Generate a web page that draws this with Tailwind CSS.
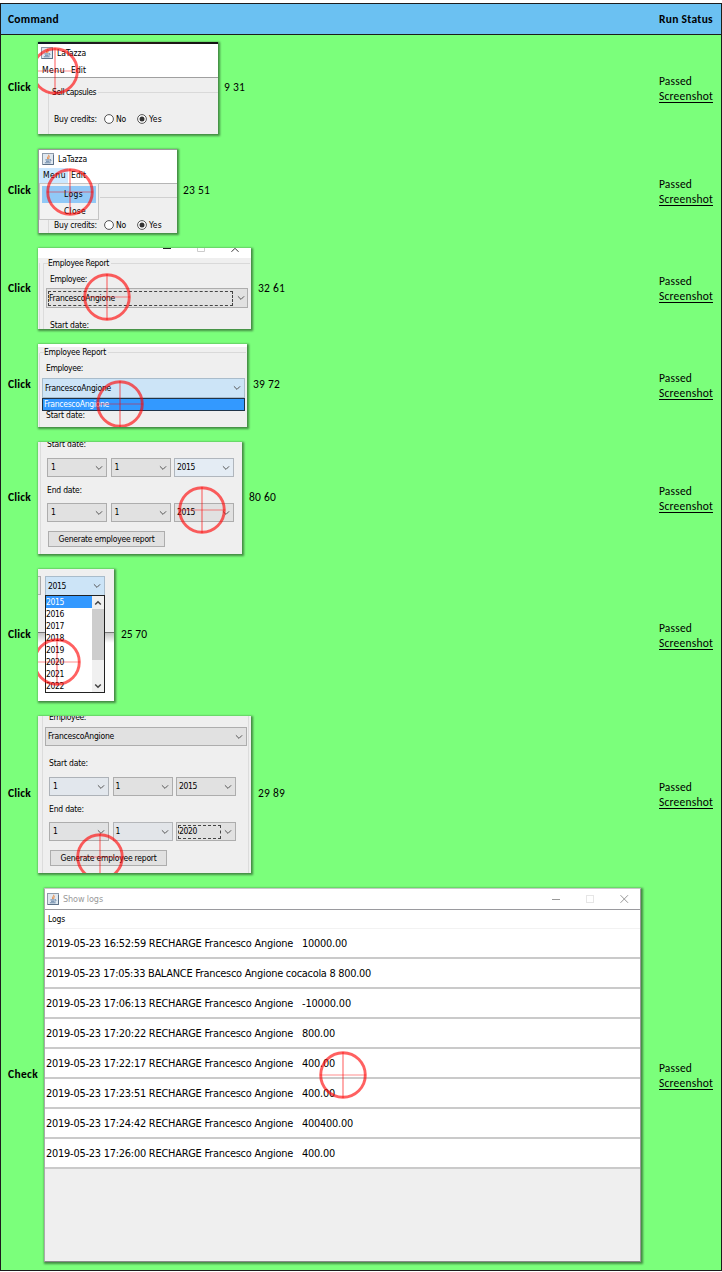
<!DOCTYPE html>
<html lang="en">
<head>
<meta charset="utf-8">
<title>Test run report</title>
<script src="https://cdn.jsdelivr.net/npm/@tailwindcss/browser@4"></script>
</head>
<body class="bg-white">
<svg width="0" height="0" class="absolute">
  <symbol id="cross" viewBox="0 0 48 48"><circle cx="24" cy="24" r="22.3" fill="none" stroke="#ff0000" stroke-opacity=".62" stroke-width="2.9"/><path d="M24 1V47" stroke="#ff0000" stroke-opacity=".6" stroke-width="1.1"/><path d="M1 24H47" stroke="#ff0000" stroke-opacity=".45" stroke-width="1.1"/></symbol>
  <symbol id="java" viewBox="0 0 12 12"><rect x=".5" y=".5" width="11" height="11" fill="#dfe8f0" stroke="#8e9baa"/><path d="M1 11.5H11.5V2" fill="none" stroke="#5d7188"/><path d="M6.6 1.8C7.6 3.2 4.6 3.8 5.8 6M7.8 3.6C6.4 4.4 6.4 5 7 6" fill="none" stroke="#e8843a" stroke-width="1"/><path d="M3.4 6.9H7.8M4 8.3H7.4M2.8 9.8H8.6M8 6.6C9.6 6.4 9.4 8 7.8 8.2" fill="none" stroke="#4c6f96" stroke-width=".8"/></symbol>
  <symbol id="chev" viewBox="0 0 8 6"><path d="M.9 1.3L4 4.4L7.1 1.3" fill="none" stroke="#555" stroke-width="1"/></symbol>
  <symbol id="off" viewBox="0 0 10 10"><circle cx="5" cy="5" r="4.4" fill="#fff" stroke="#444" stroke-width=".9"/></symbol>
  <symbol id="on" viewBox="0 0 10 10"><circle cx="5" cy="5" r="4.4" fill="#fff" stroke="#444" stroke-width=".9"/><circle cx="5" cy="5" r="2.5" fill="#333"/></symbol>
</svg>

<div class="mt-[3px] h-[1268px] w-[722px] border border-[#1c1c1c] bg-[#7bff7b] font-['Carlito','Lato',sans-serif] text-[11.5px] leading-[15px] text-black">
  <div class="flex h-[31px] items-center border-b border-[#1c1c1c] bg-[#6bc1f2] pl-[7px] font-bold">
    <div class="w-[651px]"><span data-w="51">Command</span></div><div><span data-w="54">Run Status</span></div>
  </div>

  <!-- 1 -->
  <div class="flex h-[106px] items-center pl-[7px]">
    <div class="w-[30px] pb-[2px] font-bold"><span data-w="23">Click</span></div>
    <div class="relative flex h-[92px] w-[180px] flex-col overflow-hidden bg-[#efefef] font-['DejaVu_Sans_Condensed','DejaVu_Sans',sans-serif] text-[8.5px] shadow-[1px_1px_2px_1px_rgba(0,0,0,0.45)]">
      <div class="h-[2px] shrink-0 bg-linear-to-r from-[#0c1a26] via-[#2a1a18] to-[#111]"></div>
      <div class="flex h-[18px] shrink-0 items-center gap-[4px] bg-white pl-[3px]"><svg class="size-[12px]"><use href="#java"/></svg><span data-w="29">LaTazza</span></div>
      <div class="flex h-[16px] shrink-0 items-center gap-[6px] border-b border-[#a0a0a0] bg-white pl-[4px] pt-[2px]"><span data-w="23">Menu</span><span data-w="15">Edit</span></div>
      <div class="ml-[10px] mt-[6px] flex h-[16px] shrink-0 items-center"><span class="-mr-px h-px w-[5px] bg-[#d9d9d9]"></span><span data-w="44">Sell capsules</span><span class="ml-[2px] h-px grow bg-[#d9d9d9]"></span></div>
      <div class="-mt-[8px] ml-[10px] flex h-[60px] shrink-0 border-l border-[#d9d9d9] pl-[5px] pt-[18px]">
        <div class="flex h-[18px] items-center"><span class="w-[50px]"><span data-w="43">Buy credits:</span></span><svg class="size-[10px]"><use href="#off"/></svg><span class="ml-[2px] w-[21px]"><span data-w="10">No</span></span><svg class="size-[10px]"><use href="#on"/></svg><span class="ml-[2px]" data-w="13">Yes</span></div>
      </div>
      <svg class="absolute -left-[7.5px] top-[4.5px] size-[48px]"><use href="#cross"/></svg>
    </div>
    <div class="ml-[6px] grow pb-[2px]"><span data-w="21">9 31</span></div>
    <div class="w-[62px] pt-[2px]"><div><span data-w="33">Passed</span></div><div><span class="inline-block h-[14px] border-b border-black" data-w="54">Screenshot</span></div></div>
  </div>

  <!-- 2 -->
  <div class="flex h-[100px] items-center pl-[7px]">
    <div class="w-[30px] pb-[2px] font-bold"><span data-w="23">Click</span></div>
    <div class="relative flex h-[84px] w-[139px] flex-col overflow-hidden border-l border-t border-[#999] bg-[#efefef] font-['DejaVu_Sans_Condensed','DejaVu_Sans',sans-serif] text-[8.5px] shadow-[1px_1px_2px_1px_rgba(0,0,0,0.45)]">
      <div class="flex h-[18px] shrink-0 items-center gap-[4px] bg-white pl-[3px]"><svg class="size-[12px]"><use href="#java"/></svg><span data-w="29">LaTazza</span></div>
      <div class="flex h-[16px] shrink-0 items-center gap-[3px] border-b border-[#b5b5b5] bg-white"><span class="flex h-[15px] w-[29px] items-center bg-[#cce8ff] pl-[4px]"><span data-w="23">Menu</span></span><span data-w="15">Edit</span></div>
      <div class="ml-[61px] mt-[13px] h-px shrink-0 bg-[#d0d0d0]"></div>
      <div class="ml-[9px] flex h-[60px] shrink-0 border-l border-[#d9d9d9] pl-[5px] pt-[18px]">
        <div class="flex h-[18px] items-center"><span class="w-[50px]"><span data-w="43">Buy credits:</span></span><svg class="size-[10px]"><use href="#off"/></svg><span class="ml-[2px] w-[21px]"><span data-w="10">No</span></span><svg class="size-[10px]"><use href="#on"/></svg><span class="ml-[2px]" data-w="13">Yes</span></div>
      </div>
      <div class="absolute left-0 top-[33px] h-[37px] w-[60px] border border-[#c4c4c4] bg-[#f2f2f2] p-[2px]">
        <div class="flex h-[17px] w-[54px] items-center bg-[#91c9f7] pl-[22px]"><span data-w="19">Logs</span></div>
        <div class="flex h-[16px] items-center pl-[22px]"><span data-w="22">Close</span></div>
      </div>
      <svg class="absolute left-[6.5px] top-[18px] size-[48px]"><use href="#cross"/></svg>
    </div>
    <div class="ml-[6px] grow pb-[2px]"><span data-w="27">23 51</span></div>
    <div class="w-[62px] pt-[2px]"><div><span data-w="33">Passed</span></div><div><span class="inline-block h-[14px] border-b border-black" data-w="54">Screenshot</span></div></div>
  </div>

  <!-- 3 -->
  <div class="flex h-[95px] items-center pl-[7px]">
    <div class="w-[30px] font-bold"><span data-w="23">Click</span></div>
    <div class="relative flex h-[81px] w-[213px] flex-col overflow-hidden bg-[#efefef] font-['DejaVu_Sans_Condensed','DejaVu_Sans',sans-serif] text-[8.5px] shadow-[1px_1px_2px_1px_rgba(0,0,0,0.45)]">
      <div class="flex h-[10px] shrink-0 bg-white pl-[125px]">
        <svg width="80" height="6" viewBox="0 0 80 6"><path d="M0 .5H8" stroke="#222"/><path d="M34.500 0V3.500H41.500V0" fill="none" stroke="#ccc"/><path d="M68.500 3.800L72 .3L75.500 3.800" fill="none" stroke="#333"/></svg>
      </div>
      <div class="flex h-[11px] shrink-0 items-center"><span class="ml-[5px] h-px w-[5px] bg-[#d9d9d9]"></span><span data-w="61">Employee Report</span><span class="ml-[2px] mr-px h-px grow bg-[#d9d9d9]"></span></div>
      <div class="-mt-[6px] ml-[1px] flex h-[70px] shrink-0 border-l border-[#dcdcdc] pl-[3px]">
        <div class="flex w-[206px] flex-col border-l border-[#dcdcdc] pt-[9px]">
          <div class="ml-[6px] flex h-[14px] items-center"><span data-w="37">Employee:</span></div>
          <div class="ml-[2px] mt-[2px] flex h-[20px] w-[202px] shrink-0 items-center border border-[#adadad] bg-[#e1e1e1] pl-[1px]"><div class="flex h-[15px] w-[185px] items-center border border-dashed border-[#444]"><span data-w="66">FrancescoAngione</span></div><svg class="ml-[4px] h-[6px] w-[8px]"><use href="#chev"/></svg></div>
          <div class="ml-[6px] mt-[10px] flex h-[14px] items-center"><span data-w="39">Start date:</span></div>
        </div>
      </div>
      <svg class="absolute left-[44.5px] top-[25px] size-[48px]"><use href="#cross"/></svg>
    </div>
    <div class="ml-[7px] grow"><span data-w="27">32 61</span></div>
    <div class="w-[62px] pt-[1px]"><div><span data-w="33">Passed</span></div><div><span class="inline-block h-[14px] border-b border-black" data-w="54">Screenshot</span></div></div>
  </div>

  <!-- 4 -->
  <div class="flex h-[99px] items-center pl-[7px]">
    <div class="w-[30px] pb-[2px] font-bold"><span data-w="23">Click</span></div>
    <div class="relative flex h-[83px] w-[209px] flex-col overflow-hidden bg-[#efefef] font-['DejaVu_Sans_Condensed','DejaVu_Sans',sans-serif] text-[8.5px] shadow-[1px_1px_2px_1px_rgba(0,0,0,0.45)]">
      <div class="h-[3px] shrink-0 bg-white"></div>
      <div class="flex h-[11px] shrink-0 items-center"><span class="ml-[2px] h-px w-[4px] bg-[#d9d9d9]"></span><span data-w="62">Employee Report</span><span class="ml-[2px] mr-px h-px grow bg-[#d9d9d9]"></span></div>
      <div class="-mt-[5px] ml-[1px] flex h-[80px] w-[207px] shrink-0 flex-col border-l border-[#dcdcdc] pt-[8px]">
        <div class="ml-[6px] flex h-[14px] items-center"><span data-w="37">Employee:</span></div>
        <div class="ml-[2px] mt-[3px] flex h-[20px] w-[203px] shrink-0 items-center justify-between border border-[#a9bccb] bg-[#cce4f7] pl-[2px] pr-[3px]"><span data-w="66">FrancescoAngione</span><svg class="h-[6px] w-[8px]"><use href="#chev"/></svg></div>
        <div class="ml-[2px] flex h-[13px] w-[203px] shrink-0 items-center border border-[#1f3348] bg-[#3399ff] pl-px text-white"><span data-w="65">FrancescoAngione</span></div>
        <div class="-mt-[1px] ml-[6px] flex h-[10px] items-center"><span data-w="39">Start date:</span></div>
      </div>
      <svg class="absolute left-[57.5px] top-[36px] size-[48px]"><use href="#cross"/></svg>
    </div>
    <div class="ml-[6px] grow pb-[2px]"><span data-w="27">39 72</span></div>
    <div class="w-[62px] pt-[1px]"><div><span data-w="33">Passed</span></div><div><span class="inline-block h-[14px] border-b border-black" data-w="54">Screenshot</span></div></div>
  </div>

  <!-- 5 -->
  <div class="flex h-[126px] items-center pl-[7px]">
    <div class="w-[30px] pb-[2px] font-bold"><span data-w="23">Click</span></div>
    <div class="relative h-[112px] w-[204px] overflow-hidden bg-[#efefef] font-['DejaVu_Sans_Condensed','DejaVu_Sans',sans-serif] text-[8.5px] shadow-[1px_1px_2px_1px_rgba(0,0,0,0.45)]">
      <div class="ml-[2px] flex h-[112px] flex-col border-l border-[#dcdcdc] pl-[6px]">
        <div class="-mt-[4px] flex h-[12px] shrink-0 items-center"><span data-w="39">Start date:</span></div>
        <div class="mt-[8px] flex gap-[3.500px]">
          <div class="flex h-[19px] w-[60px] items-center justify-between border border-[#adadad] bg-[#e1e1e1] px-[3px]"><span>1</span><svg class="h-[6px] w-[8px]"><use href="#chev"/></svg></div>
          <div class="flex h-[19px] w-[60px] items-center justify-between border border-[#adadad] bg-[#e1e1e1] px-[3px]"><span>1</span><svg class="h-[6px] w-[8px]"><use href="#chev"/></svg></div>
          <div class="flex h-[19px] w-[60px] items-center justify-between border border-[#b0b6bd] bg-[#e4ecf4] pl-[2px] pr-[3px]"><span data-w="18">2015</span><svg class="h-[6px] w-[8px]"><use href="#chev"/></svg></div>
        </div>
        <div class="mt-[7px] flex h-[12px] shrink-0 items-center"><span data-w="35">End date:</span></div>
        <div class="mt-[7px] flex gap-[3.500px]">
          <div class="flex h-[19px] w-[60px] items-center justify-between border border-[#adadad] bg-[#e1e1e1] px-[3px]"><span>1</span><svg class="h-[6px] w-[8px]"><use href="#chev"/></svg></div>
          <div class="flex h-[19px] w-[60px] items-center justify-between border border-[#adadad] bg-[#e1e1e1] px-[3px]"><span>1</span><svg class="h-[6px] w-[8px]"><use href="#chev"/></svg></div>
          <div class="flex h-[19px] w-[60px] items-center justify-between border border-[#adadad] bg-[#e1e1e1] pl-[2px] pr-[3px]"><span data-w="18">2015</span><svg class="h-[6px] w-[8px]"><use href="#chev"/></svg></div>
        </div>
        <div class="ml-[1px] mt-[9px] flex h-[16px] w-[117px] items-center justify-center border border-[#adadad] bg-[#e1e1e1]"><span data-w="96">Generate employee report</span></div>
      </div>
      <svg class="absolute left-[139.5px] top-[43.500px] size-[48px]"><use href="#cross"/></svg>
    </div>
    <div class="ml-[7px] grow pb-[2px]"><span data-w="27">80 60</span></div>
    <div class="w-[62px] pt-[1px]"><div><span data-w="33">Passed</span></div><div><span class="inline-block h-[14px] border-b border-black" data-w="54">Screenshot</span></div></div>
  </div>

  <!-- 6 -->
  <div class="flex h-[148px] items-center pl-[7px]">
    <div class="w-[30px] pb-[2px] font-bold"><span data-w="23">Click</span></div>
    <div class="relative h-[132px] w-[76px] overflow-hidden bg-white font-['DejaVu_Sans_Condensed','DejaVu_Sans',sans-serif] text-[8.5px] shadow-[1px_1px_2px_1px_rgba(0,0,0,0.45)]">
      <div class="flex h-[64px] gap-[4px] border-b border-[#777] bg-[#efefef] pt-[7px]">
        <div class="h-[19px] w-[3px] border border-l-0 border-[#adadad] bg-[#e1e1e1]"></div>
        <div class="flex h-[20px] w-[60px] items-center justify-between border border-[#a9bccb] bg-[#cce4f7] pl-[2px] pr-[3px]"><span data-w="18">2015</span><svg class="h-[6px] w-[8px]"><use href="#chev"/></svg></div>
      </div>
      <div class="h-[10px] bg-linear-to-b from-[#c4c4c4] to-white"></div>
      <div class="absolute left-[7px] top-[26px] flex h-[98px] w-[60px] overflow-hidden border border-[#222] bg-white leading-[12px]">
        <div class="w-[46px] shrink-0">
          <div class="h-[12px] bg-[#3399ff] text-white"><span data-w="18">2015</span></div>
          <div class="h-[12px]"><span data-w="18">2016</span></div>
          <div class="h-[12px]"><span data-w="18">2017</span></div>
          <div class="h-[12px]"><span data-w="18">2018</span></div>
          <div class="h-[12px]"><span data-w="18">2019</span></div>
          <div class="h-[12px]"><span data-w="18">2020</span></div>
          <div class="h-[12px]"><span data-w="18">2021</span></div>
          <div class="h-[12px]"><span data-w="18">2022</span></div>
        </div>
        <div class="flex grow flex-col items-center justify-between bg-[#f0f0f0] pb-[3px] pt-[4px]">
          <svg width="8" height="6" viewBox="0 0 8 6"><path d="M1.200 4.500L4 1.700L6.800 4.500" fill="none" stroke="#444" stroke-width="1.500"/></svg>
          <div class="-mt-[20px] h-[51px] w-full bg-[#cdcdcd]"></div>
          <svg width="8" height="6" viewBox="0 0 8 6"><path d="M1.200 1.500L4 4.300L6.800 1.500" fill="none" stroke="#444" stroke-width="1.500"/></svg>
        </div>
      </div>
      <svg class="absolute -left-[5.500px] top-[68.500px] size-[48px]"><use href="#cross"/></svg>
    </div>
    <div class="ml-[7px] grow pb-[2px]"><span data-w="26">25 70</span></div>
    <div class="w-[62px] pt-[2px]"><div><span data-w="33">Passed</span></div><div><span class="inline-block h-[14px] border-b border-black" data-w="54">Screenshot</span></div></div>
  </div>

  <!-- 7 -->
  <div class="flex h-[171px] items-center pl-[7px]">
    <div class="w-[30px] pb-[2px] font-bold"><span data-w="23">Click</span></div>
    <div class="relative h-[157px] w-[213px] overflow-hidden bg-[#efefef] font-['DejaVu_Sans_Condensed','DejaVu_Sans',sans-serif] text-[8.5px] shadow-[1px_1px_2px_1px_rgba(0,0,0,0.45)]">
      <div class="ml-[4px] mr-[2px] flex h-[157px] flex-col border-x border-[#dcdcdc]">
        <div class="-mt-[5px] ml-[6px] flex h-[12px] shrink-0 items-center"><span data-w="37">Employee:</span></div>
        <div class="ml-[2px] mt-[4px] flex h-[19px] w-[202px] shrink-0 items-center justify-between border border-[#adadad] bg-[#e1e1e1] pl-[2px] pr-[3px]"><span data-w="66">FrancescoAngione</span><svg class="h-[6px] w-[8px]"><use href="#chev"/></svg></div>
        <div class="ml-[6px] mt-[11px] flex h-[12px] shrink-0 items-center"><span data-w="39">Start date:</span></div>
        <div class="ml-[6px] mt-[8px] flex gap-[3.500px]">
          <div class="flex h-[19px] w-[60px] items-center justify-between border border-[#adb2b8] bg-[#e2e7ed] px-[3px]"><span>1</span><svg class="h-[6px] w-[8px]"><use href="#chev"/></svg></div>
          <div class="flex h-[19px] w-[60px] items-center justify-between border border-[#adadad] bg-[#e1e1e1] pl-[2px] pr-[3px]"><span>1</span><svg class="h-[6px] w-[8px]"><use href="#chev"/></svg></div>
          <div class="flex h-[19px] w-[60px] items-center justify-between border border-[#adadad] bg-[#e1e1e1] pl-[2px] pr-[3px]"><span data-w="18">2015</span><svg class="h-[6px] w-[8px]"><use href="#chev"/></svg></div>
        </div>
        <div class="ml-[6px] mt-[7px] flex h-[12px] shrink-0 items-center"><span data-w="35">End date:</span></div>
        <div class="ml-[6px] mt-[7px] flex gap-[3.500px]">
          <div class="flex h-[19px] w-[60px] items-center justify-between border border-[#adadad] bg-[#e1e2e3] px-[3px]"><span>1</span><svg class="h-[6px] w-[8px]"><use href="#chev"/></svg></div>
          <div class="flex h-[19px] w-[60px] items-center justify-between border border-[#b4b6b9] bg-[#e2e5e9] pl-[2px] pr-[3px]"><span>1</span><svg class="h-[6px] w-[8px]"><use href="#chev"/></svg></div>
          <div class="flex h-[19px] w-[60px] items-center justify-between border border-[#adadad] bg-[#e1e1e1] pl-[1px] pr-[3px]"><span class="flex h-[14px] w-[43px] items-center border border-dashed border-[#444]"><span data-w="18">2020</span></span><svg class="h-[6px] w-[8px]"><use href="#chev"/></svg></div>
        </div>
        <div class="ml-[7px] mt-[9px] flex h-[16px] w-[117px] shrink-0 items-center justify-center border border-[#adadad] bg-[#e1e1e1]"><span data-w="96">Generate employee report</span></div>
      </div>
      <svg class="absolute left-[37.500px] top-[116.500px] size-[48px]"><use href="#cross"/></svg>
    </div>
    <div class="ml-[7px] grow pb-[2px]"><span data-w="27">29 89</span></div>
    <div class="w-[62px] pt-[1px]"><div><span data-w="33">Passed</span></div><div><span class="inline-block h-[14px] border-b border-black" data-w="54">Screenshot</span></div></div>
  </div>

  <!-- 8 -->
  <div class="flex h-[390px] items-center pl-[7px]">
    <div class="w-[36px] pb-[2px] font-bold"><span data-w="30">Check</span></div>
    <div class="relative flex h-[374px] w-[597px] flex-col border border-b-[#8a8a8a] border-l-[#ababab] border-r-[#999] border-t-[#c8c8c8] bg-[#efefef] font-['DejaVu_Sans_Condensed','DejaVu_Sans',sans-serif] text-[10.900px] shadow-[1px_1px_2px_1px_rgba(0,0,0,0.45)]">
      <div class="flex h-[21px] shrink-0 items-center border-b border-[#9a9a9e] bg-white pl-[2px] text-[9px] text-[#9a9a9a]"><svg class="mr-[4px] size-[12px]"><use href="#java"/></svg><span data-w="40">Show logs</span>
        <svg class="ml-auto mr-[11px]" width="78" height="10" viewBox="0 0 78 10"><path d="M1 5.500H9" stroke="#999"/><rect x="35.500" y="1.500" width="7" height="7" fill="none" stroke="#e6e6e6"/><path d="M69.500 1.200L77 8.800M77 1.200L69.500 8.800" stroke="#999"/></svg></div>
      <div class="flex h-[19px] shrink-0 items-center border-b border-[#f2f2f2] bg-white pl-[3px] text-[8.5px]"><span data-w="17">Logs</span></div>
      <div class="flex h-[30px] shrink-0 items-center gap-[9px] border-b-2 border-[#cacaca] bg-white pl-[1px]"><span data-w="247">2019-05-23 16:52:59 RECHARGE Francesco Angione</span><span data-w="45">10000.00</span></div>
      <div class="flex h-[30px] shrink-0 items-center gap-[9px] border-b-2 border-[#cacaca] bg-white pl-[1px]"><span data-w="325">2019-05-23 17:05:33 BALANCE Francesco Angione cocacola 8 800.00</span></div>
      <div class="flex h-[30px] shrink-0 items-center gap-[9px] border-b-2 border-[#cacaca] bg-white pl-[1px]"><span data-w="247">2019-05-23 17:06:13 RECHARGE Francesco Angione</span><span data-w="49">-10000.00</span></div>
      <div class="flex h-[30px] shrink-0 items-center gap-[9px] border-b-2 border-[#cacaca] bg-white pl-[1px]"><span data-w="247">2019-05-23 17:20:22 RECHARGE Francesco Angione</span><span data-w="33">800.00</span></div>
      <div class="flex h-[30px] shrink-0 items-center gap-[9px] border-b-2 border-[#cacaca] bg-white pl-[1px]"><span data-w="247">2019-05-23 17:22:17 RECHARGE Francesco Angione</span><span data-w="33">400.00</span></div>
      <div class="flex h-[30px] shrink-0 items-center gap-[9px] border-b-2 border-[#cacaca] bg-white pl-[1px]"><span data-w="247">2019-05-23 17:23:51 RECHARGE Francesco Angione</span><span data-w="33">400.00</span></div>
      <div class="flex h-[30px] shrink-0 items-center gap-[9px] border-b-2 border-[#cacaca] bg-white pl-[1px]"><span data-w="247">2019-05-23 17:24:42 RECHARGE Francesco Angione</span><span data-w="51">400400.00</span></div>
      <div class="flex h-[30px] shrink-0 items-center gap-[9px] border-b-2 border-[#cacaca] bg-white pl-[1px]"><span data-w="247">2019-05-23 17:26:00 RECHARGE Francesco Angione</span><span data-w="33">400.00</span></div>
      <svg class="absolute left-[273.500px] top-[162px] size-[48px]"><use href="#cross"/></svg>
    </div>
    <div class="grow"></div>
    <div class="w-[62px] pt-[2px]"><div><span data-w="33">Passed</span></div><div><span class="inline-block h-[14px] border-b border-black" data-w="54">Screenshot</span></div></div>
  </div>
</div>
<script>
  function fit() {
    document.querySelectorAll('[data-w]').forEach(function (el) {
      el.style.whiteSpace = 'nowrap';
      el.style.letterSpacing = '0px';
      var w = el.getBoundingClientRect().width;
      el.style.letterSpacing = ((+el.dataset.w - w) / el.textContent.length) + 'px';
    });
  }
  fit();
  window.addEventListener('load', fit);
  new ResizeObserver(fit).observe(document.body);
</script>
</body>
</html>
